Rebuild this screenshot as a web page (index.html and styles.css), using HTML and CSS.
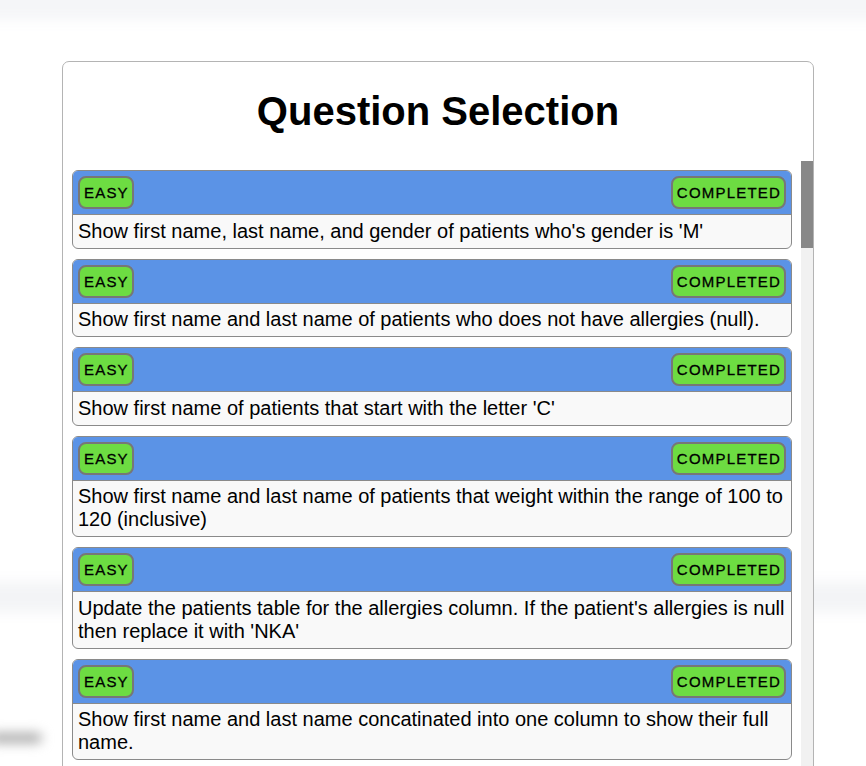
FILE: index.html
```html
<!DOCTYPE html>
<html>
<head>
<meta charset="utf-8">
<link rel="stylesheet" href="styles.css">
</head>
<body>
<div class="backdrop">
  <div class="bg-topbar"></div>
  <div class="bg-band"></div>
  <div class="bg-blob"></div>
</div>
<div class="modal">
  <h1 class="title">Question Selection</h1>
  <div class="scroller">
    <div class="list">
      <div class="card">
        <div class="card-head"><span class="badge">EASY</span><span class="badge">COMPLETED</span></div>
        <div class="card-body">Show first name, last name, and gender of patients who's gender is 'M'</div>
      </div>
      <div class="card">
        <div class="card-head"><span class="badge">EASY</span><span class="badge">COMPLETED</span></div>
        <div class="card-body">Show first name and last name of patients who does not have allergies (null).</div>
      </div>
      <div class="card">
        <div class="card-head"><span class="badge">EASY</span><span class="badge">COMPLETED</span></div>
        <div class="card-body">Show first name of patients that start with the letter 'C'</div>
      </div>
      <div class="card">
        <div class="card-head"><span class="badge">EASY</span><span class="badge">COMPLETED</span></div>
        <div class="card-body">Show first name and last name of patients that weight within the range of 100 to 120 (inclusive)</div>
      </div>
      <div class="card">
        <div class="card-head"><span class="badge">EASY</span><span class="badge">COMPLETED</span></div>
        <div class="card-body">Update the patients table for the allergies column. If the patient's allergies is null then replace it with 'NKA'</div>
      </div>
      <div class="card">
        <div class="card-head"><span class="badge">EASY</span><span class="badge">COMPLETED</span></div>
        <div class="card-body">Show first name and last name concatinated into one column to show their full name.</div>
      </div>
    </div>
    <div class="scrollbar"><div class="thumb"></div></div>
  </div>
</div>
</body>
</html>
```

FILE: styles.css
```css
html, body {
  margin: 0;
  padding: 0;
  height: 100%;
  overflow: hidden;
  background: #ffffff;
  font-family: "Liberation Sans", Arial, sans-serif;
}

.backdrop {
  position: fixed;
  inset: 0;
  filter: blur(6px);
  pointer-events: none;
}

.bg-topbar {
  position: absolute;
  left: -20px;
  right: -20px;
  top: -20px;
  height: 40px;
  background: #f5f6f8;
}

.bg-band {
  position: absolute;
  left: -20px;
  right: -20px;
  top: 582px;
  height: 30px;
  background: #f3f4f6;
}

.bg-blob {
  position: absolute;
  left: -10px;
  top: 733px;
  width: 52px;
  height: 10px;
  border-radius: 5px;
  background: #a9a9a9;
}

.modal {
  position: absolute;
  left: 62px;
  top: 61px;
  width: 750px;
  height: 760px;
  background: #ffffff;
  border: 1px solid #b4b4b4;
  border-radius: 7px;
  display: flex;
  flex-direction: column;
}

.title {
  margin: 0;
  padding: 26px 0 0;
  height: 99px;
  box-sizing: border-box;
  text-align: center;
  font-size: 40px;
  line-height: 46px;
  font-weight: bold;
  color: #000;
}

.scroller {
  flex: 1;
  display: flex;
  min-height: 0;
}

.list {
  flex: 1;
  overflow: hidden;
  padding: 9px 9px 0 9px;
  display: flex;
  flex-direction: column;
  gap: 10px;
}

.scrollbar {
  width: 12px;
  background: #f1f1f1;
  flex: none;
}

.thumb {
  height: 87px;
  background: #888;
}

.card {
  flex: none;
  border: 1px solid #8a8a8a;
  border-radius: 6px;
  overflow: hidden;
  background: #f9f9f9;
}

.card-head {
  background: #5b93e6;
  padding: 5px 5px;
  display: flex;
  justify-content: space-between;
  border-bottom: 1px solid #8a8a8a;
}

.badge {
  background: #6ddc42;
  border: 2px solid #777;
  border-radius: 8px;
  padding: 6px 3px 6px 4px;
  font-size: 15px;
  line-height: 17px;
  letter-spacing: 1.2px;
  color: #000;
  -webkit-text-stroke: 0.3px #000;
}

.card-body {
  padding: 4.5px 5px 5px 5px;
  font-size: 20px;
  line-height: 23px;
  color: #000;
}
```
